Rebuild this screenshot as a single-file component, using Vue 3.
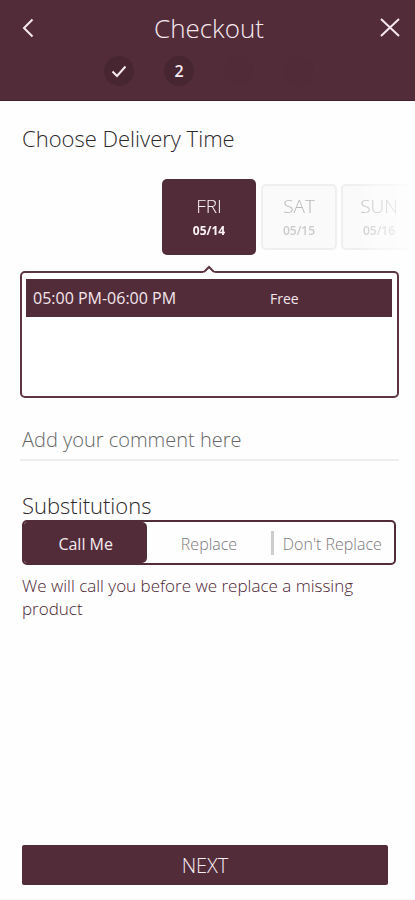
<script setup>
import { ref, computed } from 'vue'

const steps = [
  { id: 1, state: 'done' },
  { id: 2, state: 'current' },
  { id: 3, state: 'upcoming' },
  { id: 4, state: 'upcoming' },
]

const days = [
  { name: 'FRI', date: '05/14' },
  { name: 'SAT', date: '05/15' },
  { name: 'SUN', date: '05/16' },
]
const day = ref('05/14')

const slots = [{ time: '05:00 PM-06:00 PM', price: 'Free' }]

const options = [
  { label: 'Call Me', note: 'We will call you before we replace a missing product' },
  { label: 'Replace', note: 'We will replace a missing product' },
  { label: "Don't Replace", note: 'We will not replace a missing product' },
]
const choice = ref('Call Me')
const note = computed(() => options.find((o) => o.label === choice.value).note)
const comment = ref('')
</script>

<template>
  <div class="page">
    <header class="header">
      <div class="bar">
        <button class="icon-button" type="button" aria-label="Back">
          <svg width="20" height="24" viewBox="0 0 20 24"><path d="M14.500 3.500 6 12l8.500 8.500" /></svg>
        </button>
        <h1 class="title">Checkout</h1>
        <button class="icon-button close" type="button" aria-label="Close">
          <svg width="20" height="24" viewBox="0 0 20 24"><path d="M1 3l18 17M19 3 1 20" /></svg>
        </button>
      </div>
      <ol class="steps">
        <li v-for="step in steps" :key="step.id" class="step" :class="step.state">
          <svg v-if="step.state === 'done'" width="16" height="14" viewBox="0 0 16 14"><path d="M1.500 7.500 6 12 14.500 2.500" /></svg>
          <template v-else-if="step.state === 'current'">{{ step.id }}</template>
        </li>
      </ol>
    </header>

    <main class="content">
      <h2 class="heading">Choose Delivery Time</h2>
      <div class="days">
        <button
          v-for="d in days"
          :key="d.date"
          type="button"
          class="day"
          :class="{ selected: d.date === day }"
          @click="day = d.date"
        >
          <span class="day-name">{{ d.name }}</span>
          <span class="day-date">{{ d.date }}</span>
        </button>
      </div>

      <div class="slots">
        <svg class="pointer" width="14" height="8" viewBox="0 0 14 8"><path class="gap" d="M1 8 7 2l6 6z" /><path d="M2 7 7 2 12 7" /></svg>
        <button v-for="slot in slots" :key="slot.time" type="button" class="slot">
          <span class="slot-time">{{ slot.time }}</span>
          <span class="slot-price">{{ slot.price }}</span>
        </button>
      </div>

      <input v-model="comment" class="comment" type="text" aria-label="Comment" placeholder="Add your comment here" />

      <h2 class="heading">Substitutions</h2>
      <div class="segments">
        <button
          v-for="o in options"
          :key="o.label"
          type="button"
          class="segment"
          :class="{ selected: o.label === choice }"
          @click="choice = o.label"
        >
          {{ o.label }}
        </button>
      </div>
      <p class="note">{{ note }}</p>
    </main>

    <footer class="footer">
      <button class="next" type="button">NEXT</button>
    </footer>
  </div>
</template>

<style>
body {
  background: #fefefe;
}
</style>

<style scoped>
* {
  box-sizing: border-box;
}
.page {
  min-height: 100vh;
  display: flex;
  flex-direction: column;
  background: #fefefe;
  font-family: "Open Sans", "Noto Sans", sans-serif;
  font-weight: 300;
  color: #2c282b;
}
button {
  font: inherit;
  color: inherit;
  border: 0;
  padding: 0;
  margin: 0;
  background: none;
  cursor: pointer;
}
.header {
  background: #532c3a;
  border-bottom: 1px solid #45202e;
  color: #f6e9ef;
  padding: 12px 15px 14px 18px;
}
.bar {
  display: flex;
  align-items: center;
  justify-content: space-between;
  height: 32px;
}
.icon-button {
  display: flex;
}
svg {
  display: block;
  fill: none;
  stroke: currentColor;
  stroke-width: 2;
}
.title {
  margin: 0;
  font-size: 26px;
  line-height: 32px;
  font-weight: 300;
}
.steps {
  display: flex;
  justify-content: center;
  gap: 30px;
  list-style: none;
  margin: 12px 0 0;
  padding: 0;
}
.step {
  width: 30px;
  height: 30px;
  border-radius: 50%;
  display: flex;
  align-items: center;
  justify-content: center;
  background: #472631;
  font-size: 16px;
  font-weight: 600;
}
.step.upcoming {
  background: #522b39;
}
.content {
  flex: 1;
  padding: 22px 16px 24px 20px;
}
.heading {
  margin: 0 2px;
  font-size: 22px;
  line-height: 30px;
  font-weight: 300;
}
.days {
  display: flex;
  align-items: center;
  gap: 4px;
  margin: 26px -16px 0 0;
  padding-left: 142px;
  overflow: hidden;
  -webkit-mask-image: linear-gradient(to right, #000 85%, transparent);
  mask-image: linear-gradient(to right, #000 85%, transparent);
}
.day {
  flex: none;
  width: 76px;
  height: 66px;
  padding-top: 2px;
  border: 2px solid #efefef;
  border-radius: 5px;
  background: #fafafa;
  color: #b8b8b8;
  display: flex;
  flex-direction: column;
  align-items: center;
  justify-content: center;
}
.day.selected {
  width: 94px;
  height: 76px;
  margin-right: 1px;
  border: 0;
  background: #532c3a;
  color: #fbf2f6;
}
.day-name {
  font-size: 19px;
  line-height: 26px;
}
.day-date {
  font-size: 12px;
  line-height: 24px;
  font-weight: 600;
  color: #cbcbcb;
}
.day.selected .day-date {
  font-weight: 700;
  color: inherit;
}
.slots {
  position: relative;
  min-height: 127px;
  margin-top: 16px;
  padding: 6px 5px 6px 4px;
  border: 2px solid #5e3545;
  border-radius: 5px;
  background: #fff;
}
.pointer {
  position: absolute;
  left: 180px;
  top: -8px;
  color: #5e3545;
}
.gap {
  fill: #fff;
  stroke: none;
}
.slot {
  width: 100%;
  height: 38px;
  padding: 0 7px;
  display: grid;
  grid-template-columns: 237fr 115fr;
  align-items: center;
  text-align: left;
  background: #532c3a;
  color: #f3e6ec;
}
.slot-time {
  font-size: 16px;
  font-weight: 400;
}
.slot-price {
  font-size: 14px;
  font-weight: 400;
}
.comment {
  display: block;
  width: 100%;
  height: 42px;
  margin: 21px 0 29px;
  padding: 0 2px;
  border: 0;
  border-bottom: 2px solid #ededed;
  border-radius: 0;
  background: none;
  font: inherit;
  font-size: 20px;
  color: #2c282b;
}
.comment::placeholder {
  color: #666;
  opacity: 1;
}
.segments {
  display: grid;
  grid-template-columns: 1fr 1fr 1fr;
  height: 45px;
  margin: 0 3px 0 2px;
  border: 2px solid #532c3a;
  border-radius: 5px;
  overflow: hidden;
}
.segment {
  position: relative;
  padding-top: 2px;
  font-size: 16px;
  color: #7c7878;
  white-space: nowrap;
}
.segment.selected {
  background: #532c3a;
  border-radius: 0 5px 5px 0;
  color: #f6ecf0;
  font-weight: 400;
}
.segment:last-child::before {
  content: "";
  position: absolute;
  left: 0;
  top: 9px;
  bottom: 8px;
  width: 3px;
  background: #cfcccd;
}
.note {
  margin: 9px 2px 0;
  font-size: 17px;
  line-height: 23px;
  color: #4c2434;
}
.footer {
  padding: 0 27px 14px 22px;
  border-bottom: 1px solid #f4f4f4;
}
.next {
  display: block;
  width: 100%;
  height: 40px;
  background: #532c3a;
  border-radius: 2px;
  color: #f8edf2;
  font-size: 20px;
}
</style>
